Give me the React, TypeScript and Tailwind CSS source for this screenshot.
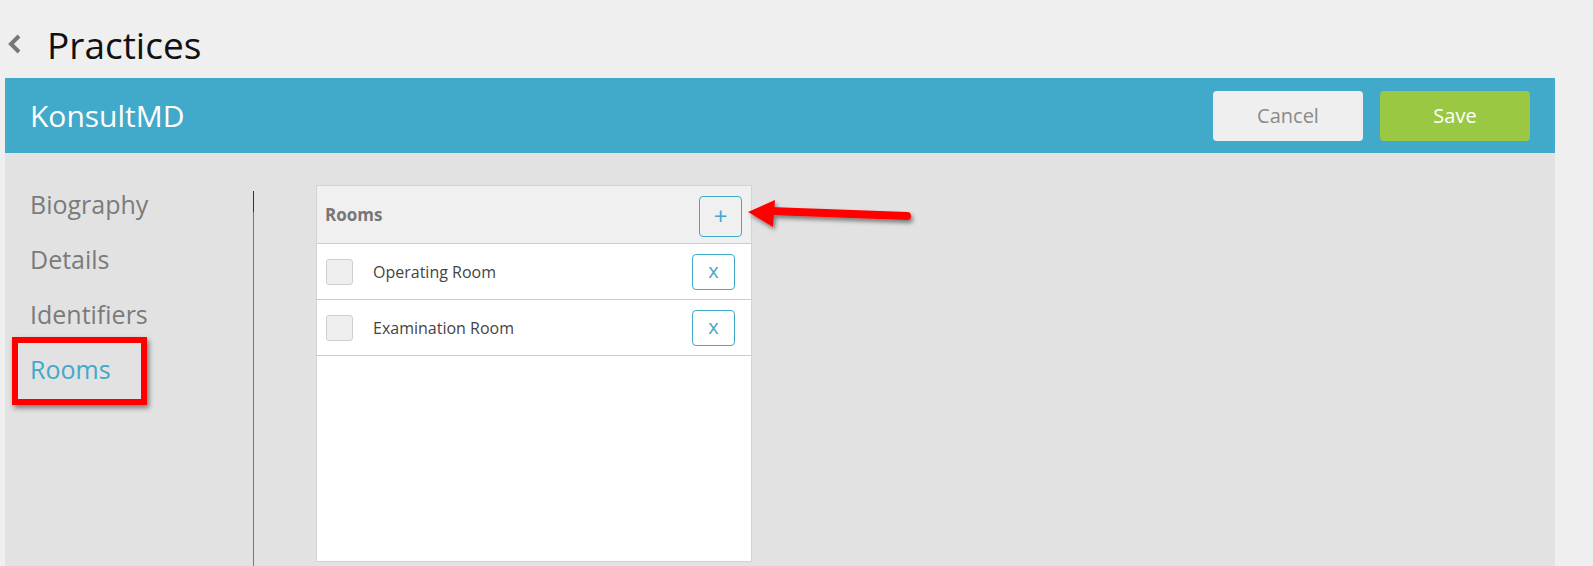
import React from 'react';

const navItems = ['Biography', 'Details', 'Identifiers', 'Rooms'];
const rooms = ['Operating Room', 'Examination Room'];

const RoomRow: React.FC<{ name: string }> = ({ name }) => (
  <div className="flex items-center h-[56px] border-b border-[#cccccc] pl-[9px] pr-[16px]">
    <div className="w-[27px] h-[26px] rounded-[3px] bg-[#efefef] border border-[#cfcfcf]" />
    <span className="ml-[20px] text-[16px] text-[#444444]">{name}</span>
    <button className="ml-auto w-[43px] h-[36px] rounded-[4px] border border-[#41a9c9] text-[#41a9c9] text-[20px] leading-none pb-[2px]">
      x
    </button>
  </div>
);

export default function App() {
  return (
    <div className="relative h-[566px] overflow-hidden bg-[#efefef] font-['Open_Sans',sans-serif]">
      {/* Page title */}
      <div className="flex h-[78px]">
        <svg className="ml-[8px] mt-[34px] w-[13px] h-[20px]" viewBox="0 0 13 20">
          <polyline points="11,2 3,10 11,18" fill="none" stroke="#777777" strokeWidth="4" />
        </svg>
        <h1 className="ml-[26px] pt-[26px] text-[37px] leading-none text-[#111111]">Practices</h1>
      </div>

      <div className="ml-[5px] w-[1550px]">
        {/* Blue header */}
        <div className="flex items-center justify-between h-[75px] bg-[#41a9c9] pl-[25px] pr-[25px]">
          <span className="text-[30px] text-white">KonsultMD</span>
          <div className="flex gap-[17px]">
            <button className="w-[150px] h-[50px] rounded-[4px] bg-[#efefef] text-[20px] text-[#8a8a8a]">Cancel</button>
            <button className="w-[150px] h-[50px] rounded-[4px] bg-[#9ac843] text-[20px] text-white">Save</button>
          </div>
        </div>

        {/* Body */}
        <div className="flex h-[413px] bg-[#e2e2e2]">
          <nav className="w-[248px] pl-[25px] pt-[24px]">
            {navItems.map((item) => (
              <div
                key={item}
                className={`relative h-[55px] leading-[55px] text-[25px] ${item === 'Rooms' ? 'text-[#41a9c9]' : 'text-[#7b7b7b]'}`}
              >
                {item}
                {item === 'Rooms' && (
                  <div className="absolute left-[-18px] top-[-5px] w-[135px] h-[68px] border-[6px] border-[#ff0000] shadow-[2px_3px_5px_rgba(0,0,0,0.45)]" />
                )}
              </div>
            ))}
          </nav>

          <div className="mt-[38px] flex flex-col w-px">
            <div className="h-[21px] bg-[#333333]" />
            <div className="flex-1 bg-[#777777]" />
          </div>

          <div className="pl-[62px] pt-[32px]">
            <div className="w-[436px] h-[377px] bg-white border border-[#d3d3d3]">
              <div className="flex items-center h-[58px] bg-[#f0f0f0] border-b border-[#cccccc] pl-[8px] pr-[9px]">
                <span className="text-[17px] font-bold text-[#777777]">Rooms</span>
                <button className="ml-auto mt-[3px] w-[43px] h-[41px] rounded-[4px] border border-[#41a9c9] text-[#41a9c9] text-[24px] leading-none">
                  +
                </button>
              </div>
              {rooms.map((r) => (
                <RoomRow key={r} name={r} />
              ))}
            </div>
          </div>
        </div>
      </div>

      {/* Annotation arrow */}
      <svg className="absolute left-[740px] top-[192px] w-[180px] h-[45px]" viewBox="0 0 180 45">
        <defs>
          <filter id="sh" x="-20%" y="-50%" width="140%" height="200%">
            <feDropShadow dx="2" dy="3" stdDeviation="2" floodColor="#000" floodOpacity="0.45" />
          </filter>
        </defs>
        <g filter="url(#sh)">
          <line x1="30" y1="19" x2="167" y2="24" stroke="#ff0000" strokeWidth="8" strokeLinecap="round" />
          <polygon points="8,20 35,8 33,35" fill="#ff0000" />
        </g>
      </svg>
    </div>
  );
}
